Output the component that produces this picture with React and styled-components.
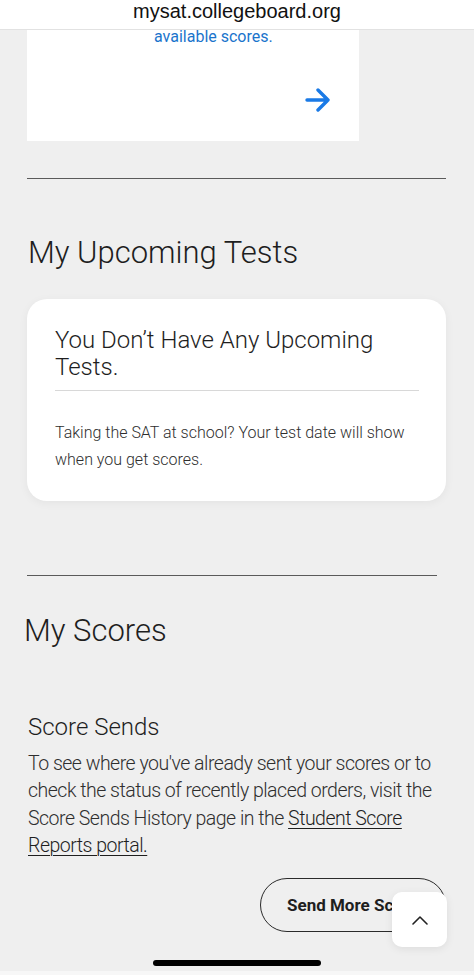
import React from 'react';
import styled, { createGlobalStyle } from 'styled-components';

const GlobalStyle = createGlobalStyle`
  html, body {
    margin: 0;
    padding: 0;
    background: #efefef;
    overflow: hidden;
  }

  body {
    font-family: Roboto, "Liberation Sans", sans-serif;
    color: #1e1e1e;
  }
`;

const AddressBar = styled.header`
  position: fixed;
  top: 0;
  left: 0;
  right: 0;
  height: 29px;
  z-index: 10;
  background: #ffffff;
  border-bottom: 1px solid #e2e2e2;
  text-align: center;
  font-family: "Liberation Sans", Arial, sans-serif;
  font-size: 20px;
  line-height: 22px;
  color: #111;
`;

const Page = styled.main`
  padding: 0 28px 0 27px;
`;

const ScoreCard = styled.div`
  background: #ffffff;
  height: 141px;
  width: 332px;
  box-sizing: border-box;
  padding: 27px 28px 0 127px;
  display: flex;
  flex-direction: column;
`;

const ScoreLink = styled.a`
  font-size: 16px;
  line-height: 20px;
  color: #1a74cc;
  text-decoration: none;
`;

const ArrowWrap = styled.div`
  margin-top: 41px;
  display: flex;
  justify-content: flex-end;
`;

const Rule = styled.hr`
  border: none;
  border-top: 1px solid #5a5a5a;
  margin: ${(p) => p.$top}px 0 0;
  width: ${(p) => p.$width}px;
`;

const SectionTitle = styled.h2`
  font-size: 31px;
  font-weight: 300;
  line-height: 36px;
  margin: ${(p) => p.$top}px 0 0 ${(p) => p.$indent || 1}px;
  color: #1e1e1e;
`;

const InfoCard = styled.section`
  margin-top: 28px;
  background: #ffffff;
  border-radius: 20px;
  box-shadow: 0 2px 10px rgba(0, 0, 0, 0.05);
  padding: 28px 27px 28px 28px;
`;

const InfoTitle = styled.h3`
  margin: 0;
  font-size: 24px;
  font-weight: 300;
  line-height: 27px;
  padding-bottom: 9px;
  border-bottom: 1px solid #d8d8d8;
  color: #1e1e1e;
`;

const InfoText = styled.p`
  margin: 28px 0 0;
  font-size: 16px;
  font-weight: 300;
  line-height: 27px;
  color: #2e2e2e;
`;

const SubTitle = styled.h3`
  margin: 64px 0 0 1px;
  font-size: 24px;
  font-weight: 300;
  line-height: 28px;
  color: #1e1e1e;
`;

const Paragraph = styled.p`
  margin: 9px 0 0 1px;
  font-size: 19.5px;
  font-weight: 300;
  letter-spacing: -0.5px;
  line-height: 27.3px;
  color: #2e2e2e;

  a {
    color: #1e1e1e;
    text-decoration: underline;
    text-underline-offset: 3px;
    text-decoration-thickness: 1px;
  }
`;

const ButtonRow = styled.div`
  margin-top: 19px;
  display: flex;
  justify-content: flex-end;
`;

const OutlineButton = styled.button`
  height: 54px;
  width: 186px;
  box-sizing: border-box;
  border: 1.5px solid #2a2a2a;
  border-radius: 27px;
  background: transparent;
  font-family: Roboto, "Liberation Sans", sans-serif;
  font-weight: 700;
  font-size: 17px;
  color: #1e1e1e;
  text-align: left;
  padding: 0 0 0 26px;
  white-space: nowrap;
  overflow: hidden;
  cursor: pointer;
`;

const BackToTop = styled.button`
  position: fixed;
  right: 27px;
  bottom: 28px;
  width: 55px;
  height: 55px;
  border: none;
  border-radius: 10px;
  background: #ffffff;
  box-shadow: 0 2px 8px rgba(0, 0, 0, 0.08);
  display: flex;
  align-items: center;
  justify-content: center;
  z-index: 5;
  cursor: pointer;
`;

const HomeIndicator = styled.div`
  position: fixed;
  left: 50%;
  bottom: 9px;
  width: 168px;
  height: 6px;
  margin-left: -84px;
  border-radius: 3px;
  background: #000;
  z-index: 6;
`;

const BottomEdge = styled.div`
  position: fixed;
  left: 0;
  right: 0;
  bottom: 0;
  height: 4px;
  background: #f7f7f7;
`;

const ArrowRight = () => (
  <svg width="26" height="24" viewBox="0 0 26 24" fill="none">
    <path
      d="M2 12H23M13 2L23 12L13 22"
      stroke="#1a7ae6"
      strokeWidth="3.4"
      strokeLinecap="round"
      strokeLinejoin="round"
    />
  </svg>
);

const ChevronUp = () => (
  <svg width="16" height="10" viewBox="0 0 16 10" fill="none">
    <path d="M1 9L8 2L15 9" stroke="#222" strokeWidth="1.6" strokeLinecap="round" strokeLinejoin="round" />
  </svg>
);

export default function App() {
  return (
    <>
      <GlobalStyle />
      <AddressBar>mysat.collegeboard.org</AddressBar>
      <Page>
        <ScoreCard>
          <ScoreLink href="#">available scores.</ScoreLink>
          <ArrowWrap>
            <ArrowRight />
          </ArrowWrap>
        </ScoreCard>

        <Rule $top={37} $width={419} />
        <SectionTitle $top={56}>My Upcoming Tests</SectionTitle>

        <InfoCard>
          <InfoTitle>You Don’t Have Any Upcoming Tests.</InfoTitle>
          <InfoText>
            Taking the SAT at school? Your test date will show when you get scores.
          </InfoText>
        </InfoCard>

        <Rule $top={74} $width={410} />
        <SectionTitle $top={37} $indent={-3}>My Scores</SectionTitle>

        <SubTitle>Score Sends</SubTitle>
        <Paragraph>
          To see where you've already sent your scores or to check the status of recently
          placed orders, visit the Score Sends History page in the{' '}
          <a href="#">Student Score Reports portal.</a>
        </Paragraph>

        <ButtonRow>
          <OutlineButton>Send More Scores</OutlineButton>
        </ButtonRow>
      </Page>

      <BackToTop aria-label="Back to top">
        <ChevronUp />
      </BackToTop>
      <HomeIndicator />
      <BottomEdge />
    </>
  );
}
